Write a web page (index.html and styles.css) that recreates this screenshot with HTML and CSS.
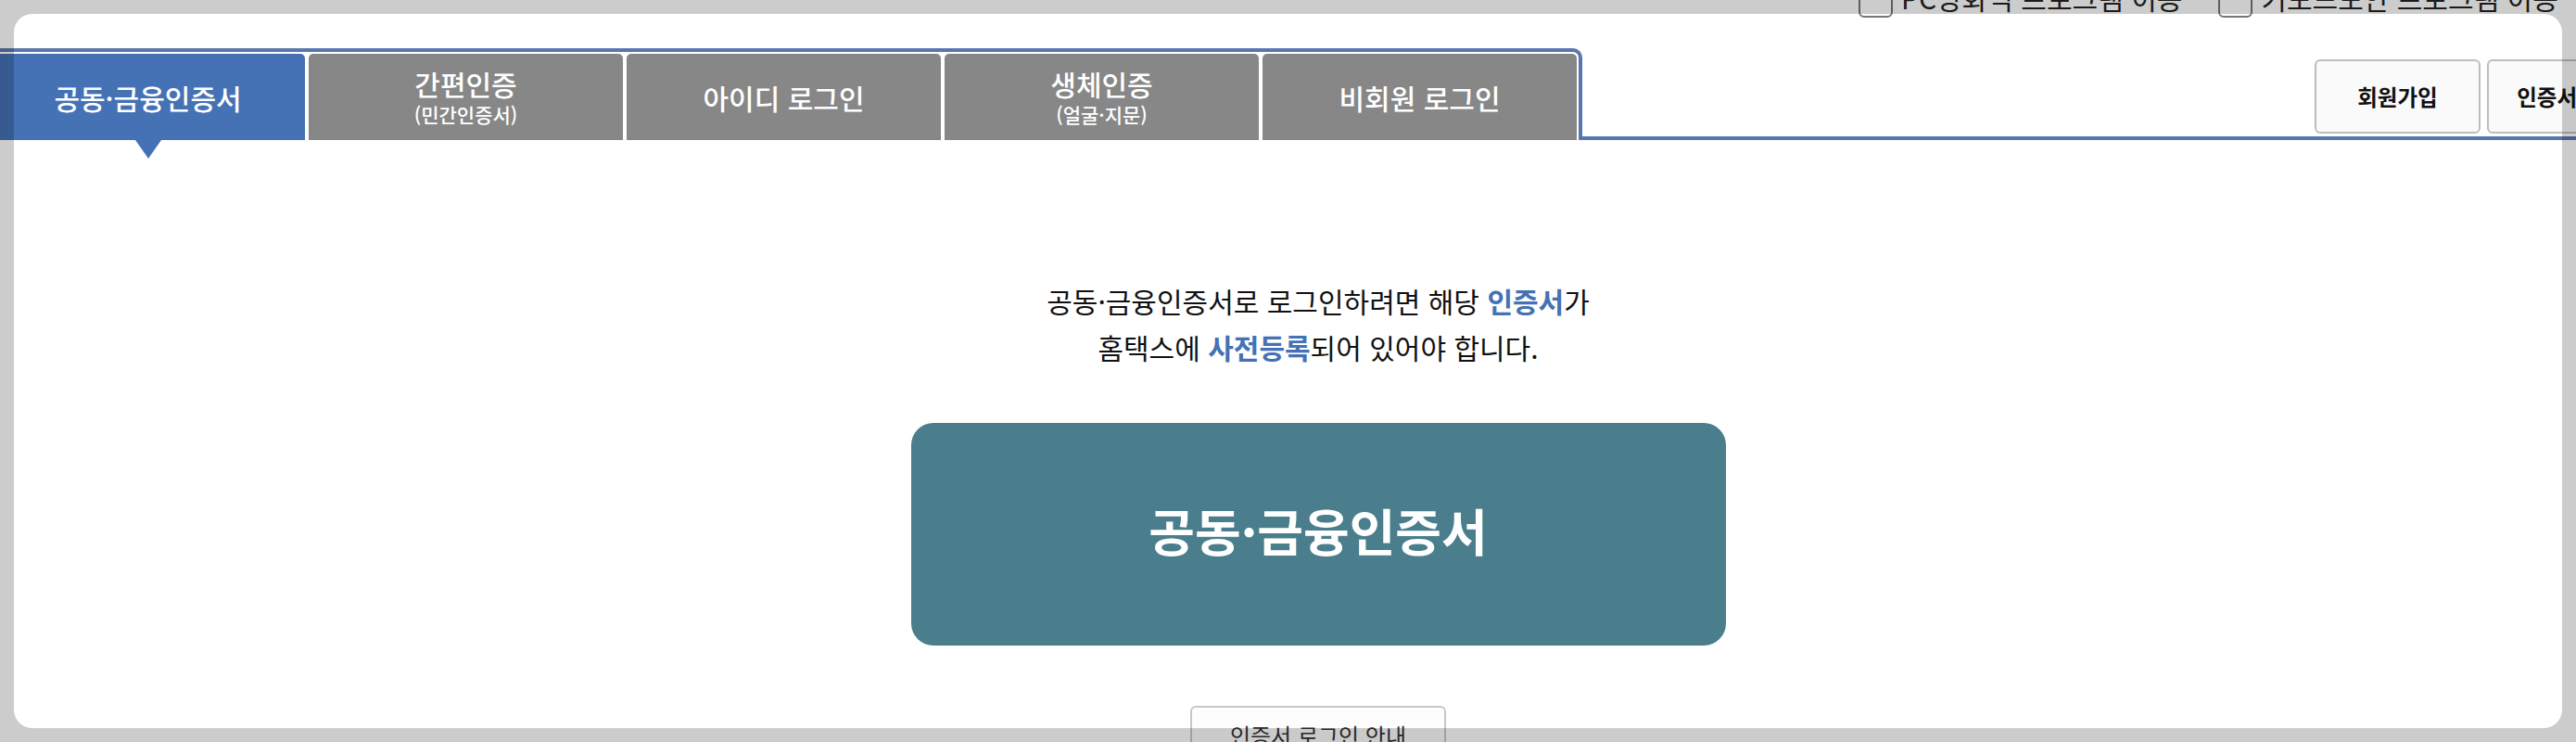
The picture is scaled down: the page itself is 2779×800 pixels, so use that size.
FILE: index.html
```html
<!DOCTYPE html>
<html lang="ko">
<head>
<meta charset="utf-8">
<title>홈택스 로그인</title>
<link rel="stylesheet" href="styles.css">
</head>
<body>
<div class="page">
  <div class="topbar">
    <label class="chk"><span class="box"></span>PC방화벽 프로그램 이용</label>
    <label class="chk"><span class="box"></span>키보드보안 프로그램 이용</label>
  </div>
  <header class="header">
    <ul class="tabs">
      <li class="tab active">공동·금융인증서</li>
      <li class="tab two"><span class="main-label">간편인증</span><span class="sub-label">(민간인증서)</span></li>
      <li class="tab">아이디 로그인</li>
      <li class="tab two"><span class="main-label">생체인증</span><span class="sub-label">(얼굴·지문)</span></li>
      <li class="tab">비회원 로그인</li>
    </ul>
    <div class="header-right">
      <button class="hbtn">회원가입</button>
      <button class="hbtn">인증서 등록</button>
    </div>
  </header>
  <main class="content">
    <p class="desc">공동·금융인증서로 로그인하려면 해당 <strong>인증서</strong>가<br>홈택스에 <strong>사전등록</strong>되어 있어야 합니다.</p>
    <button class="cert-btn">공동·금융인증서</button>
    <button class="guide-btn">인증서 로그인 안내</button>
  </main>
</div>
<div class="spotlight"></div>
</body>
</html>
```
FILE: styles.css
```css
html, body {
  margin: 0;
  padding: 0;
  background: #ffffff;
  overflow: hidden;
}
body {
  width: 2779px;
  height: 800px;
  font-family: "Noto Sans CJK KR", "Noto Sans", sans-serif;
  color: #111;
}
.page {
  position: relative;
  display: flow-root;
  height: 800px;
}

/* top utility checkboxes (partly above the viewport) */
.topbar {
  position: absolute;
  left: 2005px;
  top: -25px;
  display: flex;
  align-items: center;
  gap: 39px;
  font-size: 30px;
  line-height: 40px;
  color: #222;
  white-space: nowrap;
}
.chk {
  display: flex;
  align-items: center;
  gap: 9px;
}
.box {
  width: 33px;
  height: 33px;
  margin-top: 7px;
  border: 2px solid #767676;
  border-radius: 6px;
  background: #fff;
}

/* header with tabs */
.header {
  display: flex;
  align-items: flex-end;
  margin: 52px -100px 0 -10px;
}
.tabs {
  display: flex;
  gap: 4px;
  list-style: none;
  margin: 0;
  padding: 2px 2px 0 0;
  border-top: 4px solid #5a77ad;
  border-right: 4px solid #5a77ad;
  border-top-right-radius: 10px;
}
.tab {
  width: 339px;
  height: 93px;
  background: #878787;
  color: #fff;
  border-radius: 5px 5px 0 0;
  display: flex;
  flex-direction: column;
  align-items: center;
  justify-content: center;
  font-size: 30px;
  font-weight: 500;
  line-height: 36px;
  white-space: nowrap;
}
.tab.active {
  position: relative;
  background: #4572b5;
}
.tab.active::after {
  content: "";
  position: absolute;
  left: 50%;
  top: 100%;
  margin-left: -14px;
  border-left: 14px solid transparent;
  border-right: 14px solid transparent;
  border-top: 20px solid #4572b5;
}
.main-label {
  line-height: 36px;
}
.sub-label {
  font-size: 21px;
  line-height: 30px;
}
.header-right {
  flex: 1;
  display: flex;
  justify-content: flex-end;
  gap: 7px;
  padding: 0 17px 3px 0;
  border-bottom: 4px solid #5a77ad;
}
.hbtn {
  width: 179px;
  height: 80px;
  border: 2px solid #bdbdbd;
  border-radius: 6px;
  background: #fafafa;
  font-family: inherit;
  font-size: 23.5px;
  font-weight: 700;
  color: #111;
  padding: 0;
  white-space: nowrap;
}

/* main content */
.content {
  display: flex;
  flex-direction: column;
  align-items: center;
  padding-left: 65px;
}
.desc {
  margin: 148px 0 0;
  font-size: 30px;
  line-height: 50px;
  text-align: center;
  color: #111;
}
.desc strong {
  color: #4572b5;
  font-weight: 700;
}
.cert-btn {
  margin-top: 57px;
  width: 879px;
  height: 240px;
  border: none;
  border-radius: 24px;
  background: #4a7e8c;
  color: #fff;
  font-family: inherit;
  font-size: 54px;
  font-weight: 700;
  padding: 0 0 10px;
}
.guide-btn {
  margin-top: 65px;
  width: 276px;
  height: 62px;
  border: 2px solid #c8c8c8;
  border-radius: 6px;
  background: #fdfdfd;
  font-family: inherit;
  font-size: 24px;
  color: #333;
  padding: 0;
  white-space: nowrap;
}

/* dimmed frame around the dialog */
.spotlight {
  position: fixed;
  left: 15px;
  top: 15px;
  width: 2749px;
  height: 770px;
  border-radius: 20px;
  box-shadow: 0 0 0 3000px rgba(0, 0, 0, 0.2);
  pointer-events: none;
}
```
